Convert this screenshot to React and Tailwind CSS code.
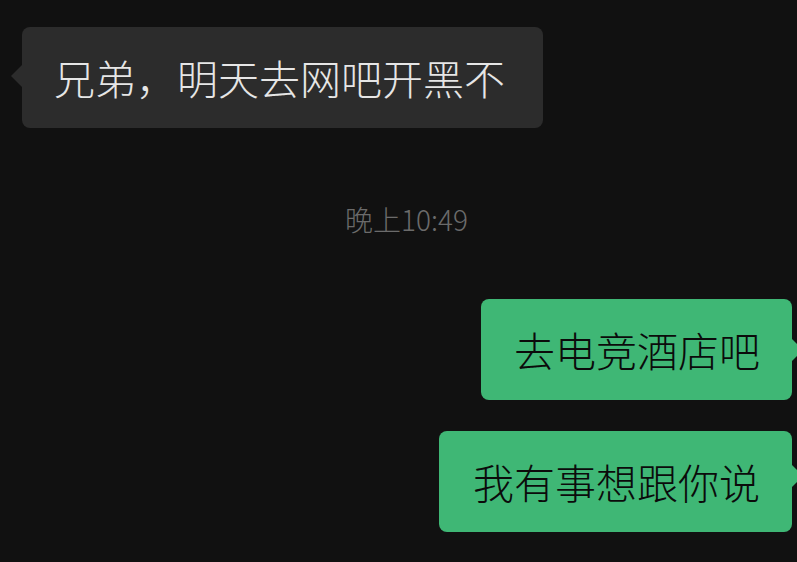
export default function App() {
  const font = { fontFamily: '"Noto Sans CJK SC", "Noto Sans", sans-serif' };
  return (
    <div className="w-[797px] h-[562px] overflow-hidden bg-[#111111] flex flex-col" style={font}>
      <div className="pt-[27px] pl-[22px] flex">
        <div className="relative bg-[#2c2c2c] rounded-[8px] h-[101px] pl-[32px] pr-[38px] flex items-center text-[41px] font-light leading-none text-[#e6e6e6]">
          <div className="absolute left-[-11px] top-[37px] w-0 h-0 border-y-[12px] border-y-transparent border-r-[12px] border-r-[#2c2c2c]" />
          兄弟，明天去网吧开黑不
        </div>
      </div>
      <div className="mt-[76px] h-[30px] flex justify-center items-center text-[28px] font-light leading-none text-[#6b6b6b] pl-[16px]">
        晚上10:49
      </div>
      <div className="mt-[65px] flex flex-col items-end pr-[5px] gap-[31px]">
        <div className="relative bg-[#3fb775] rounded-[8px] h-[101px] pl-[33px] pr-[32px] flex items-center text-[41px] font-light leading-none text-[#0b0b0b]">
          <div className="absolute right-[-11px] top-[39px] w-0 h-0 border-y-[12px] border-y-transparent border-l-[12px] border-l-[#3fb775]" />
          去电竞酒店吧
        </div>
        <div className="relative bg-[#3fb775] rounded-[8px] h-[101px] pl-[34px] pr-[32px] flex items-center text-[41px] font-light leading-none text-[#0b0b0b]">
          <div className="absolute right-[-11px] top-[33px] w-0 h-0 border-y-[12px] border-y-transparent border-l-[12px] border-l-[#3fb775]" />
          我有事想跟你说
        </div>
      </div>
    </div>
  );
}
